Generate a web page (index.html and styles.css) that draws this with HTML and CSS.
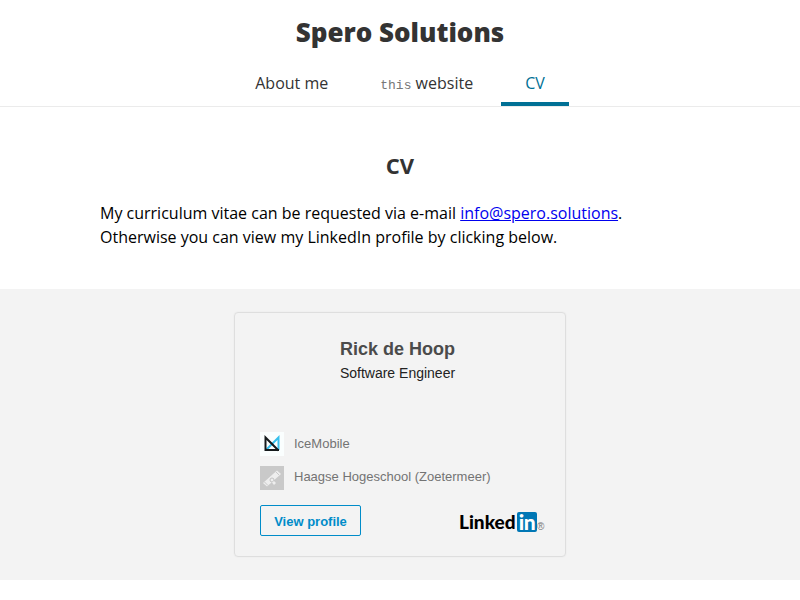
FILE: index.html
```html
<!DOCTYPE html>
<html lang="en">
<head>
<meta charset="utf-8">
<title>Spero Solutions</title>
<link rel="stylesheet" href="styles.css">
</head>
<body>
<header class="header">
<h1>Spero Solutions</h1>
<nav class="nav"><a>About me</a><a><code>this</code> website</a><a class="active">CV</a></nav>
</header>
<main>
<section class="intro">
<h2>CV</h2>
<p>My curriculum vitae can be requested via e-mail <a href="mailto:info@spero.solutions">info@spero.solutions</a>.<br>Otherwise you can view my LinkedIn profile by clicking below.</p>
</section>
<section class="band">
<div class="card">
<h3>Rick de Hoop</h3>
<p class="role">Software Engineer</p>
<div class="row"><svg width="24" height="24" viewBox="0 0 24 24"><rect width="24" height="24" fill="#fafefe"/><path d="M6 18L18.500 5.500V18" fill="none" stroke="#35bfec" stroke-width="2"/><path d="M19 18H5.500V5.500L18.500 18.500" fill="none" stroke="#151a1c" stroke-width="2"/></svg><span>IceMobile</span></div>
<div class="row"><svg width="24" height="24" viewBox="0 0 24 24"><rect width="24" height="24" fill="#c9c9c9"/><path d="M3 17L17 4.500L21 8L7 20.500Z" fill="#eee"/><path d="M4.500 16L8 19.500M16 6L19 9" stroke="#c9c9c9" stroke-width="1"/><circle cx="12" cy="14" r="2" fill="#eee" stroke="#c2c2c2"/><path d="M12 16.500L14 19L16 17L14 15" fill="#eee"/></svg><span>Haagse Hogeschool (Zoetermeer)</span></div>
<div class="foot"><a class="btn">View profile</a><span class="logo"><span class="word">Linked</span><span class="in">in</span><span class="reg">®</span></span></div>
</div>
</section>
</main>
</body>
</html>
```
FILE: styles.css
```css
* { box-sizing: border-box; }
body { margin: 0; font: 16px/24px "Open Sans", sans-serif; color: #000; background: #fff; }
h1, h2, h3, p { margin: 0; }
.header { height: 107px; border-bottom: 1px solid #ebebeb; text-align: center; color: #333; padding-top: 14px; }
h1 { font-size: 26px; line-height: 36px; font-weight: 800; }
.nav { display: flex; justify-content: center; margin-top: 10px; gap: 4px; }
.nav a { height: 46px; padding: 11px 24px 0; border-bottom: 4px solid transparent; }
.nav code { font: 13px "Liberation Mono", monospace; color: #777; }
.nav .active { color: #007095; border-color: #007095; }
.intro { width: 600px; margin: 0 auto; height: 182px; padding-top: 41px; }
h2 { text-align: center; font-size: 22px; line-height: 34px; color: #333; margin-bottom: 19px; }
.intro a { color: #00e; }
.band { background: #f3f3f3; height: 291px; padding-top: 23px; font-family: "Liberation Sans", sans-serif; }
.card { width: 332px; height: 245px; margin: 0 auto; border: 1px solid #dedede; border-radius: 4px; padding: 24px 20px 0 25px; box-shadow: 0 0 2px rgba(0,0,0,.06); }
h3 { text-align: center; font-size: 18px; line-height: 24px; color: #4b4b4b; margin-right: 10px; }
.role { text-align: center; font-size: 14px; line-height: 24px; margin: 0 10px 47px 0; color: #222; }
.row { display: flex; gap: 10px; height: 34px; font-size: 13px; color: #737373; }
.row + .row { line-height: 22px; }
.foot { display: flex; justify-content: space-between; margin-top: 5px; }
.btn { width: 101px; height: 31px; border: 1px solid #008cc9; border-radius: 2px; color: #008cc9; font-weight: 700; font-size: 13px; line-height: 31px; text-align: center; }
.logo { display: flex; width: 86px; height: 20px; margin-top: 7px; font-family: Lato, sans-serif; line-height: 20px; }
.word { width: 58px; font-size: 19px; font-weight: 900; }
.in { width: 20px; height: 20px; border-radius: 2px; background: #0077b5; color: #fff; font-size: 21px; font-weight: 900; text-align: center; letter-spacing: -.5px; }
.reg { font: 10px/20px "Liberation Sans", sans-serif; color: #777; padding: 5px 0 0 0; }
```
